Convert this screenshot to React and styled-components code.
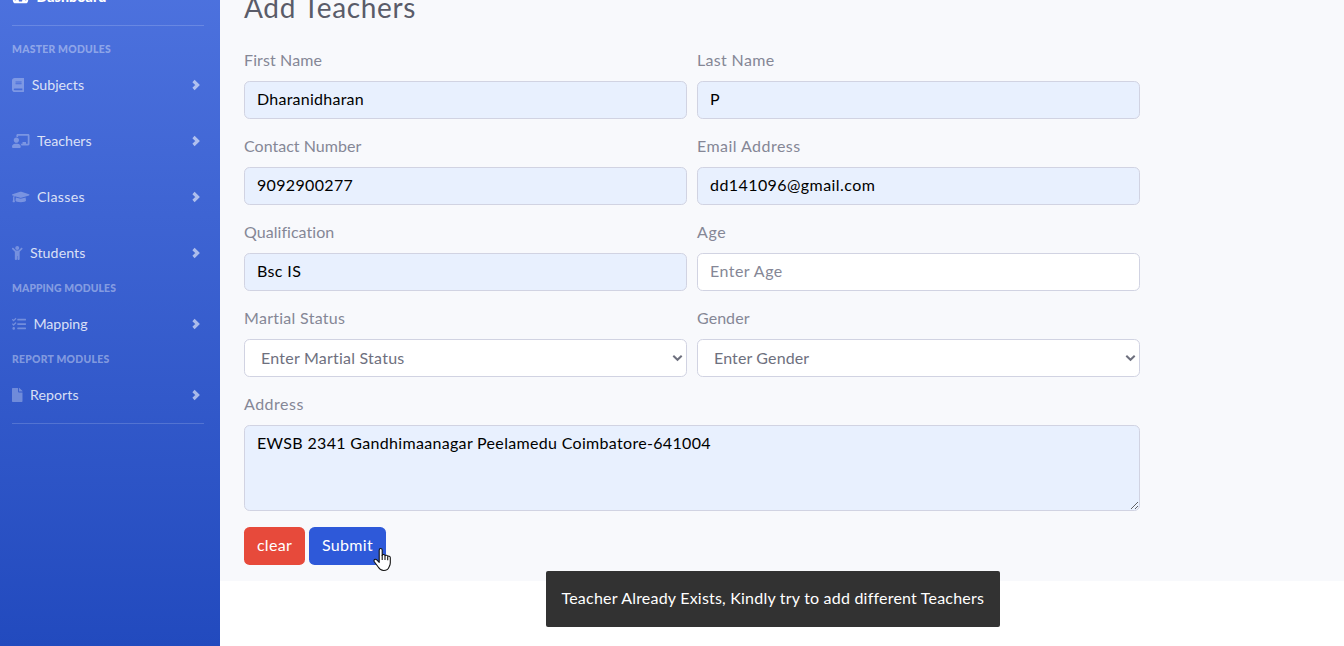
import React from "react";
import styled, { createGlobalStyle } from "styled-components";
import {
  FaTachometerAlt,
  FaBook,
  FaChalkboardTeacher,
  FaGraduationCap,
  FaChild,
  FaTasks,
  FaFile,
} from "react-icons/fa";

const GlobalStyle = createGlobalStyle`
  *, *::before, *::after { box-sizing: border-box; }
  html, body { margin: 0; height: 100%; overflow: hidden; }
  body {
    font-family: Lato, "Liberation Sans", sans-serif;
    font-size: 16px;
    line-height: 24px;
    font-variant-ligatures: none;
    color: #858796;
    background: #fff;
  }
  input, select, textarea, button { font: inherit; margin: 0; }
`;

const Page = styled.div`
  display: flex;
  height: 646px;
  width: 100%;
  overflow: hidden;
`;

const Sidebar = styled.nav`
  width: 220px;
  flex: none;
  height: 646px;
  display: flex;
  flex-direction: column;
  padding: 0 16px 0 12px;
  background: linear-gradient(180deg, #4e73df -32px, #224abe 646px);
  color: #fff;
`;

const Divider = styled.hr`
  width: 100%;
  height: 1px;
  border: 0;
  margin: ${(p) => (p.$spaced ? "14px 0 16px" : 0)};
  flex: none;
  background: rgba(255, 255, 255, 0.17);
`;

const NavHeading = styled.div`
  height: 15px;
  line-height: 14px;
  flex: none;
  font-size: 10.4px;
  font-weight: 900;
  letter-spacing: ${(p) => p.$track || 0}px;
  color: rgba(255, 255, 255, 0.4);
  white-space: nowrap;
`;

const NavItem = styled.a`
  height: ${(p) => (p.$active ? 28 : 56)}px;
  margin-top: ${(p) => (p.$active ? -17 : 0)}px;
  flex: none;
  display: flex;
  align-items: center;
  gap: 7.5px;
  padding-right: 3px;
  font-size: 14.2px;
  font-weight: ${(p) => (p.$active ? 900 : 400)};
  color: ${(p) => (p.$active ? "#fff" : "rgba(255,255,255,.82)")};
`;

const NavIcon = styled.span`
  flex: none;
  display: flex;
  width: ${(p) => p.$width}px;
  height: 14px;
  color: ${(p) => (p.$active ? "#fff" : "rgba(255,255,255,.3)")};

  svg {
    width: 100%;
    height: 100%;
  }
`;

const NavText = styled.span`
  flex: 1;
  line-height: 20px;
  margin-top: -1px;
  letter-spacing: ${(p) => p.$track || 0}px;
  white-space: nowrap;
`;

const ChevronSvg = styled.svg`
  flex: none;
  width: 9px;
  height: 12px;
  color: rgba(255, 255, 255, 0.58);
`;

const Main = styled.main`
  flex: 1;
  height: 581px;
  background: #f8f9fc;
  padding-left: 24px;
`;

const Title = styled.h3`
  margin: -10px 0 25px;
  height: 34px;
  line-height: 34px;
  font-size: 28px;
  font-weight: 400;
  letter-spacing: 0.66px;
  color: #5a5c69;
`;

const Form = styled.form`
  width: 896px;
  display: grid;
  grid-template-columns: 1fr 1fr;
  column-gap: 10px;
  row-gap: 16px;
`;

const Field = styled.div`
  display: flex;
  flex-direction: column;
  grid-column: ${(p) => (p.$wide ? "1 / -1" : "auto")};
`;

const Label = styled.label`
  height: 24px;
  line-height: 22px;
  margin-bottom: 8px;
  letter-spacing: ${(p) => p.$track || 0}px;
`;

const Input = styled.input`
  width: 100%;
  height: 38px;
  padding: 4px 12px 8px;
  border: 1px solid #d1d3e2;
  border-radius: 5.6px;
  outline: 0;
  background: ${(p) => (p.$filled ? "#e8f0fe" : "#fff")};
  color: ${(p) => (p.$filled ? "#000" : "#6e707e")};
  letter-spacing: ${(p) => p.$track || 0}px;
  &::placeholder { color: #858796; opacity: 1; }
`;

const SelectBox = styled.div`
  position: relative;
  display: flex;
`;

const Select = styled.select`
  appearance: none;
  width: 100%;
  height: 38px;
  padding: 6px 16px;
  border: 1px solid #d1d3e2;
  border-radius: 5.6px;
  background: #fff;
  color: #6e707e;
  letter-spacing: ${(p) => p.$track || 0}px;
`;

const SelectArrow = styled.svg`
  position: absolute;
  right: 4.5px;
  top: 15px;
  width: 11px;
  height: 8px;
  pointer-events: none;
  color: #6e707e;
`;

const TextArea = styled.textarea`
  display: block;
  width: 100%;
  height: 86px;
  padding: 5px 12px;
  border: 1px solid #d1d3e2;
  border-radius: 5.6px;
  background: #e8f0fe;
  color: #000;
  resize: vertical;
  letter-spacing: 0.32px;
`;

const Actions = styled.div`
  grid-column: 1 / -1;
  display: flex;
  gap: 4px;
`;

const Button = styled.button`
  position: relative;
  width: ${(p) => p.$width}px;
  height: 38px;
  padding: 0 0 2px;
  border: 0;
  border-radius: 5.6px;
  color: #fff;
  background: ${(p) => (p.$danger ? "#e74a3b" : "#2e59d9")};
  letter-spacing: 0.3px;
`;

const Pointer = styled.svg`
  position: absolute;
  left: 64px;
  top: 20px;
  width: 19px;
  height: 25px;
`;

const Toast = styled.div`
  position: absolute;
  left: 546px;
  top: 571px;
  width: 454px;
  height: 56px;
  padding: 15px 15.5px 0;
  border-radius: 2px;
  background: #323232;
  color: #fff;
  white-space: nowrap;
  letter-spacing: 0.21px;
`;

const Chevron = () => (
  <ChevronSvg viewBox="0 0 9 12">
    <path d="M1.500 2 L5.600 6 L1.500 10" fill="none" stroke="currentColor" strokeWidth="3.200" />
  </ChevronSvg>
);

const NavLink = ({ icon: Icon, width, text, track }) => (
  <NavItem>
    <NavIcon $width={width}>
      <Icon />
    </NavIcon>
    <NavText $track={track}>{text}</NavText>
    <Chevron />
  </NavItem>
);

const TextField = ({ label, labelTrack, value, placeholder, track }) => (
  <Field>
    <Label $track={labelTrack}>{label}</Label>
    <Input $filled={!!value} $track={track} defaultValue={value} placeholder={placeholder} />
  </Field>
);

const SelectField = ({ label, labelTrack, option, track }) => (
  <Field>
    <Label $track={labelTrack}>{label}</Label>
    <SelectBox>
      <Select $track={track}>
        <option>{option}</option>
      </Select>
      <SelectArrow viewBox="0 0 11 8">
        <path d="M1.300 1.700 L5.500 5.800 L9.700 1.700" fill="none" stroke="currentColor" strokeWidth="2" />
      </SelectArrow>
    </SelectBox>
  </Field>
);

export default function App() {
  return (
    <>
      <GlobalStyle />
      <Page>
        <Sidebar>
          <NavItem $active>
            <NavIcon $active $width={17}>
              <FaTachometerAlt />
            </NavIcon>
            <NavText $track={0.1}>Dashboard</NavText>
          </NavItem>
          <Divider $spaced />
          <NavHeading $track={0.25}>MASTER MODULES</NavHeading>
          <NavLink icon={FaBook} width={12.25} text="Subjects" />
          <NavLink icon={FaChalkboardTeacher} width={17.5} text="Teachers" />
          <NavLink icon={FaGraduationCap} width={17.5} text="Classes" track={0.3} />
          <NavLink icon={FaChild} width={10.5} text="Students" track={0.08} />
          <NavHeading $track={0.1}>MAPPING MODULES</NavHeading>
          <NavLink icon={FaTasks} width={14} text="Mapping" track={-0.1} />
          <NavHeading $track={0.26}>REPORT MODULES</NavHeading>
          <NavLink icon={FaFile} width={10.5} text="Reports" track={0.05} />
          <Divider />
        </Sidebar>
        <Main>
          <Title>Add Teachers</Title>
          <Form>
            <TextField label="First Name" labelTrack={0.12} value="Dharanidharan" track={0.25} />
            <TextField label="Last Name" labelTrack={0.33} value="P" />
            <TextField label="Contact Number" labelTrack={0.02} value="9092900277" track={0.33} />
            <TextField label="Email Address" labelTrack={0.45} value="dd141096@gmail.com" track={0.43} />
            <TextField label="Qualification" labelTrack={0.04} value="Bsc IS" track={0.4} />
            <TextField label="Age" labelTrack={0.6} placeholder="Enter Age" track={0.47} />
            <SelectField label="Martial Status" labelTrack={0.28} option="Enter Martial Status" track={0.23} />
            <SelectField label="Gender" labelTrack={0.05} option="Enter Gender" track={0.13} />
            <Field $wide>
              <Label $track={0.5}>Address</Label>
              <TextArea
                spellCheck={false}
                defaultValue="EWSB 2341 Gandhimaanagar Peelamedu Coimbatore-641004"
              />
            </Field>
            <Actions>
              <Button type="button" $danger $width={61}>clear</Button>
              <Button type="button" $width={77}>
                Submit
                <Pointer viewBox="0 0 19 25">
                  <path
                    d="M6.2 13.6V3.2c0-2.2 3-2.2 3 0v5.2c.4-1.3 2.6-1.1 2.8.4.6-1 2.5-.7 2.7.7.7-.8 2.6-.4 2.6 1.2v5c0 2-.6 3-1.2 4.2-.9 2.7-2.6 3.6-5.4 3.6-2.9 0-4.2-1.3-5.3-3.2L1.3 14.700c-1-1.9 1-3.2 2.5-1.8l2.4 2.4z"
                    fill="#fff"
                    stroke="#111"
                    strokeWidth="1.1"
                    strokeLinejoin="round"
                  />
                  <path d="M9.200 8v5M12 9v4M14.700 10v3.200" stroke="#111" strokeWidth="1.1" />
                </Pointer>
              </Button>
            </Actions>
          </Form>
        </Main>
      </Page>
      <Toast>Teacher Already Exists, Kindly try to add different Teachers</Toast>
    </>
  );
}
